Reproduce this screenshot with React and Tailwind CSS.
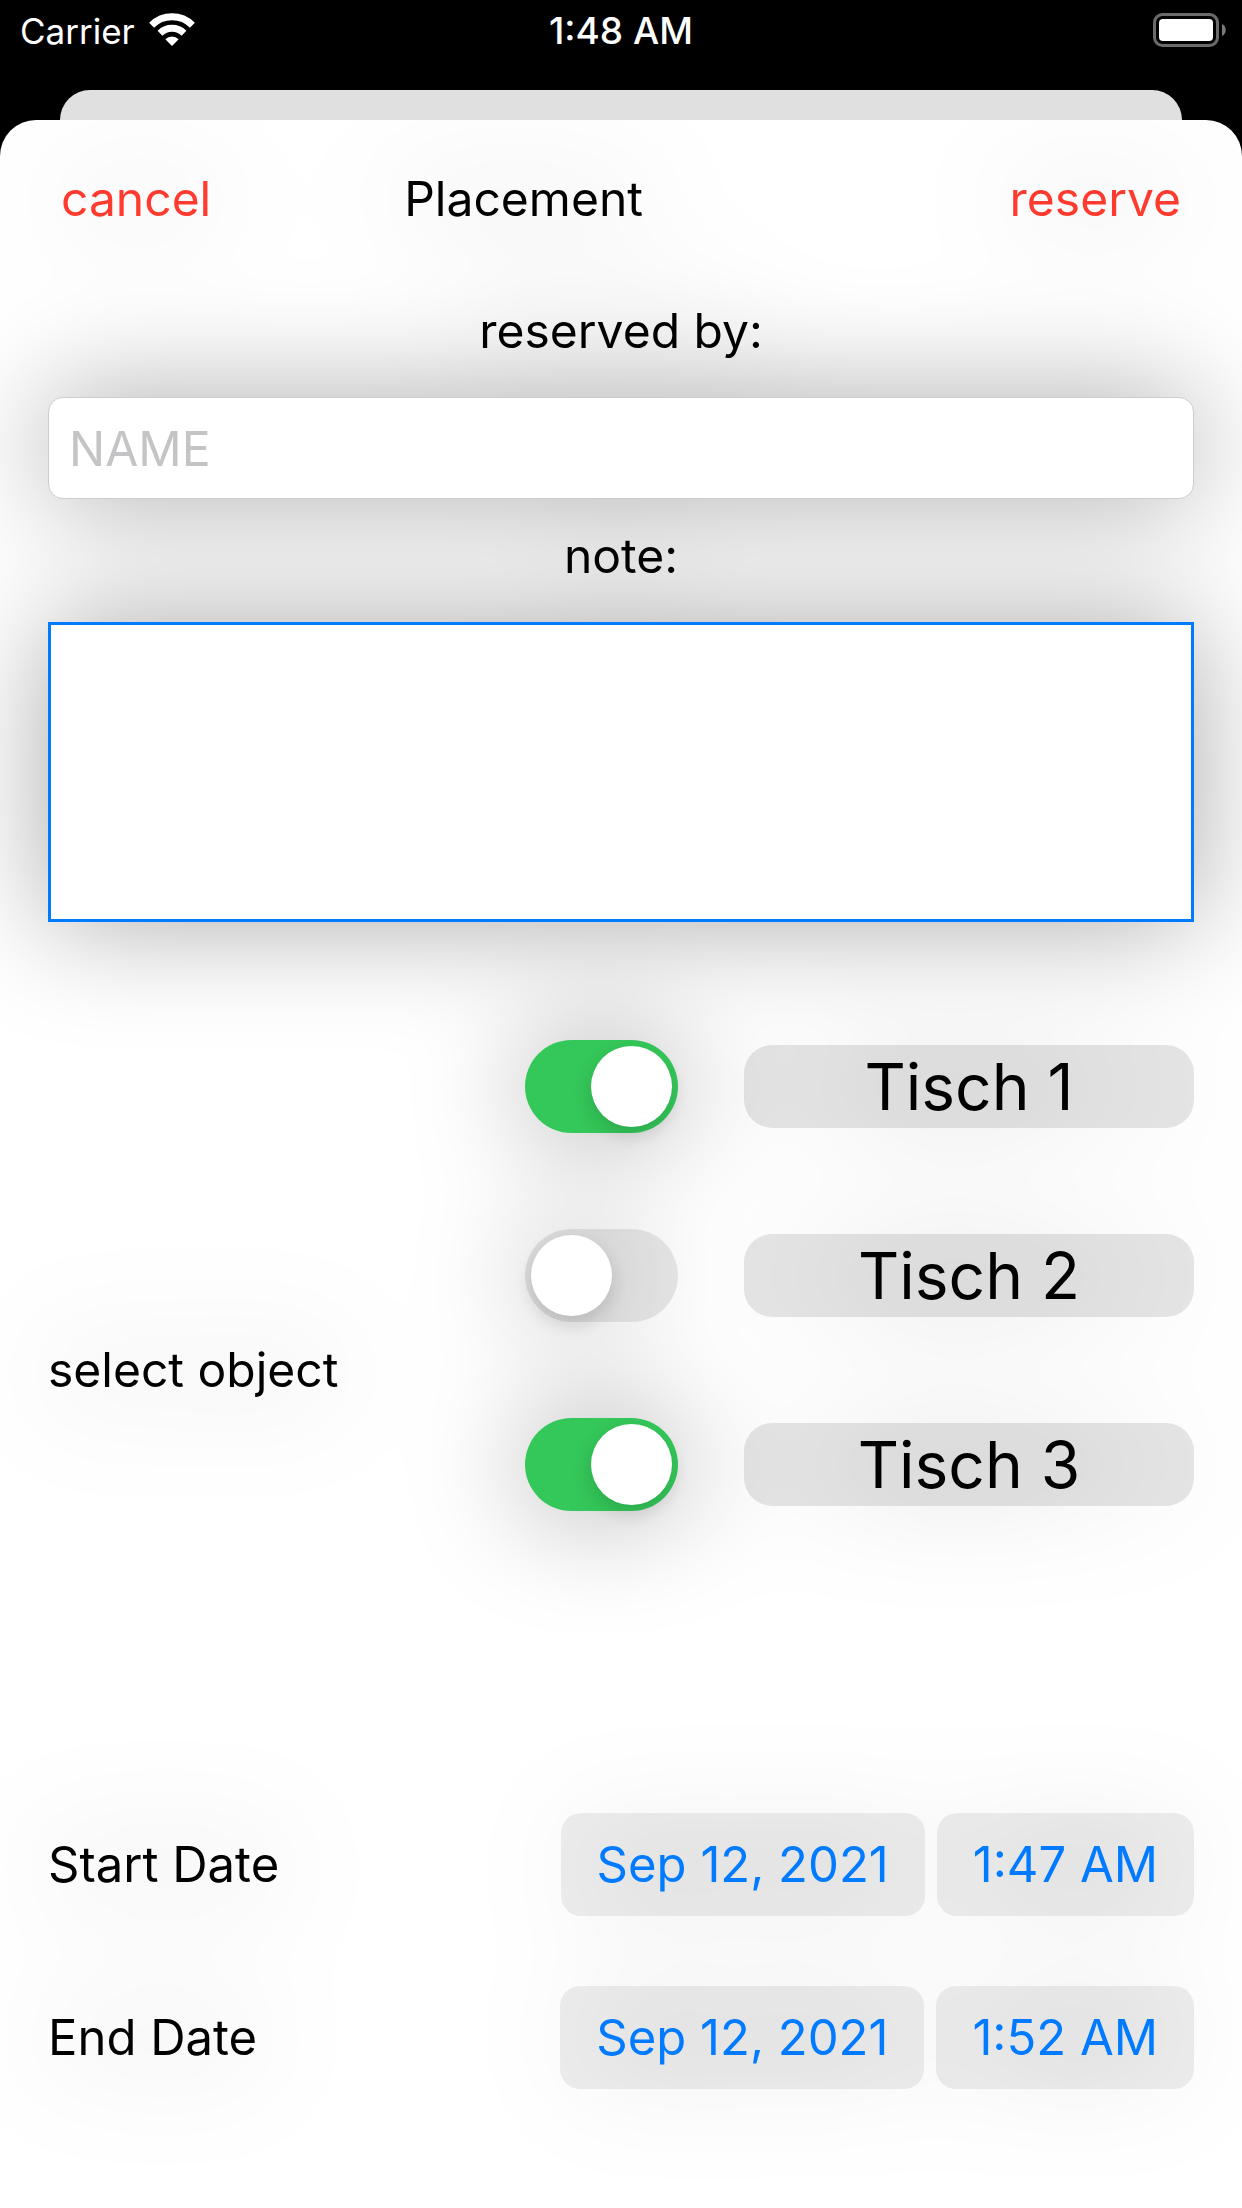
import { useState } from "react";

function StatusBar() {
  return (
    <header className="grid h-[90px] grid-cols-3 items-start px-[20px] text-[35px] leading-[62px] text-white">
      <div className="flex items-start gap-[14px]">
        <span>Carrier</span>
        <svg className="mt-[13px] h-[33px] w-[46px]" viewBox="0 0 46 33" fill="none" aria-label="Wi-Fi">
          <path d="M2.6 12.2 A29 29 0 0 1 43.4 12.2" stroke="white" strokeWidth="7" />
          <path d="M11 20.2 A17.2 17.2 0 0 1 35 20.2" stroke="white" strokeWidth="7" />
          <path d="M23 33 L16.3 26.2 A9.5 9.5 0 0 1 29.7 26.2 Z" fill="white" />
        </svg>
      </div>
      <span className="text-center text-[37px] font-medium">1:48 AM</span>
      <svg className="mt-[13px] -mr-[4px] h-[34px] w-[73px] justify-self-end" viewBox="0 0 73 34" fill="none" aria-label="Battery">
        <rect x="1.5" y="1.5" width="63" height="31" rx="8" stroke="#6b6b6b" strokeWidth="3" />
        <rect x="6" y="6" width="54" height="22" rx="4" fill="white" />
        <path d="M69 11 C74 13 74 21 69 23 Z" fill="#7a7a7a" />
      </svg>
    </header>
  );
}

function ObjectRow({ name, on }) {
  const [checked, setChecked] = useState(on);
  return (
    <label className="flex items-center gap-[66px]">
      <input
        type="checkbox"
        role="switch"
        checked={checked}
        onChange={(e) => setChecked(e.target.checked)}
        className="h-[93px] w-[153px] shrink-0 appearance-none rounded-full bg-black/9 p-[6px] before:block before:size-[81px] before:rounded-full before:bg-white before:shadow-[0_8px_20px_rgba(0,0,0,0.15)] checked:bg-[#34c759] checked:before:ml-[60px]"
      />
      <span className="flex h-[83px] flex-1 items-center justify-center rounded-[28px] bg-black/10 text-[64px]">
        {name}
      </span>
    </label>
  );
}

function DateRow({ label, date, time }) {
  const pill = "h-[103px] rounded-[20px] bg-black/7 px-[36px] text-[#007aff]";
  return (
    <div className="flex items-center gap-[12px]">
      <span className="flex-1">{label}</span>
      <button type="button" aria-label={label + " day"} className={pill}>{date}</button>
      <button type="button" aria-label={label + " time"} className={pill}>{time}</button>
    </div>
  );
}

export default function App() {
  return (
    <div className="flex min-h-screen flex-col bg-black font-[Inter,'Liberation_Sans',sans-serif]">
      <StatusBar />
      <div className="mx-[60px] h-[30px] rounded-t-[30px] bg-[#e0e0e0]" />
      <main className="flex-1 overflow-hidden rounded-t-[36px] bg-white">
        <form className="flex flex-col px-[48px] pt-[47px] pb-[119px] text-[48px] leading-[64px] text-black drop-shadow-[0_0_58px_rgba(0,0,0,0.34)]">
          <div className="flex px-[13px] text-[#ff3b30]">
            <button type="button">cancel</button>
            <span className="flex-[10]" />
            <h1 className="text-black">Placement</h1>
            <span className="flex-[19]" />
            <button type="submit">reserve</button>
          </div>
          <label htmlFor="name" className="mt-[68px] text-center">reserved by:</label>
          <input
            id="name"
            placeholder="NAME"
            className="mt-[34px] h-[102px] rounded-[15px] border border-[#cccccc] bg-white px-[20px] placeholder:text-[#c4c4c6]"
          />
          <label htmlFor="note" className="mt-[25px] text-center">note:</label>
          <textarea id="note" className="mt-[34px] h-[300px] resize-none border-[3px] border-[#007aff] bg-white p-[16px]" />
          <div className="mt-[118px] flex items-center">
            <span className="w-[477px]">select object</span>
            <div className="flex flex-1 flex-col gap-[96px] pb-[189px]">
              <ObjectRow name="Tisch 1" on />
              <ObjectRow name="Tisch 2" on={false} />
              <ObjectRow name="Tisch 3" on />
            </div>
          </div>
          <div className="mt-[113px] flex flex-col gap-[70px] text-[49px]">
            <DateRow label="Start Date" date="Sep 12, 2021" time="1:47 AM" />
            <DateRow label="End Date" date="Sep 12, 2021" time="1:52 AM" />
          </div>
        </form>
      </main>
    </div>
  );
}
